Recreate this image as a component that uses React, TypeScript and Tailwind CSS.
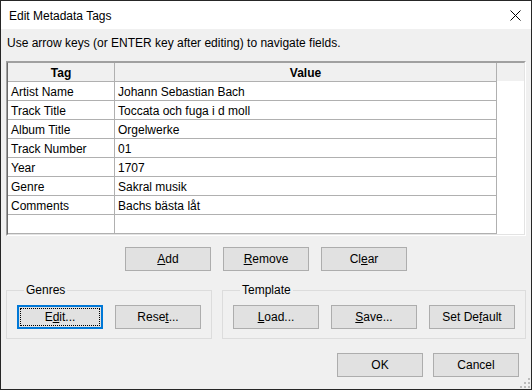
import type { ReactNode } from "react";

const rows: [string, string][] = [
  ["Artist Name", "Johann Sebastian Bach"],
  ["Track Title", "Toccata och fuga i d moll"],
  ["Album Title", "Orgelwerke"],
  ["Track Number", "01"],
  ["Year", "1707"],
  ["Genre", "Sakral musik"],
  ["Comments", "Bachs bästa låt"],
  ["", ""],
];

function Btn({
  children,
  focused = false,
}: {
  children: ReactNode;
  focused?: boolean;
}) {
  if (focused) {
    return (
      <div className="flex h-[24px] w-[86px] items-center justify-center border-2 border-[#0078d7] bg-[#e1e1e1] p-[1px]">
        <div className="flex h-full w-full items-center justify-center border border-dotted border-black">
          {children}
        </div>
      </div>
    );
  }
  return (
    <div className="flex h-[24px] w-[86px] items-center justify-center border border-[#adadad] bg-[#e1e1e1]">
      {children}
    </div>
  );
}

function Group({
  title,
  width,
  children,
}: {
  title: string;
  width: string;
  children: ReactNode;
}) {
  return (
    <fieldset className={`${width} border border-[#dcdcdc] px-[10px] pb-[9px] pt-[7px]`}>
      <legend className="ml-[7px] px-[2px] leading-[16px]">{title}</legend>
      <div className="flex gap-[12px]">{children}</div>
    </fieldset>
  );
}

export default function App() {
  return (
    <div
      className="flex h-[390px] w-[532px] flex-col border border-[#262626] bg-white text-[12px] leading-[16px] text-black"
      style={{ fontFamily: '"Liberation Sans", Arial, sans-serif' }}
    >
      <div className="flex h-[30px] items-center justify-between pl-[8px] pr-[10px] pt-[1px]">
        <span>Edit Metadata Tags</span>
        <svg width="11" height="11" viewBox="0 0 11 11">
          <path d="M0.5 0.5L10.5 10.5M10.5 0.5L0.5 10.5" stroke="#000" strokeWidth="1" />
        </svg>
      </div>

      <div className="flex flex-1 flex-col bg-[#f0f0f0] px-[5px] pt-[6px]">
        <div className="pl-[1px]">Use arrow keys (or ENTER key after editing) to navigate fields.</div>

        <div className="mt-[10px] h-[175px] border border-b-white border-l-[#a0a0a0] border-r-white border-t-[#a0a0a0]">
          <div className="flex h-full border border-b-[#e3e3e3] border-l-[#696969] border-r-[#e3e3e3] border-t-[#a0a0a0] bg-white">
            <div className="flex w-[489px] flex-col">
              <div className="flex h-[19px] border-b border-[#b0b0b0] bg-[#f0f0f0] font-bold">
                <div className="flex w-[107px] items-center justify-center border-r border-[#b0b0b0] pt-[1px]">Tag</div>
                <div className="flex w-[382px] items-center justify-center border-r border-[#b0b0b0] pt-[1px]">Value</div>
              </div>
              {rows.map(([tag, value], i) => (
                <div key={i} className="flex h-[19px] border-b border-[#b0b0b0]">
                  <div className="flex w-[107px] items-center border-r border-[#b0b0b0] pl-[3px] pt-[1px]">{tag}</div>
                  <div className="flex w-[382px] items-center border-r border-[#b0b0b0] pl-[3px] pt-[1px]">{value}</div>
                </div>
              ))}
            </div>
            <div className="flex flex-1 flex-col">
              <div className="h-[18px] bg-[#f0f0f0]" />
            </div>
          </div>
        </div>

        <div className="mt-[11px] flex justify-center gap-[12px]">
          <Btn>
            <u>A</u>dd
          </Btn>
          <Btn>
            <u>R</u>emove
          </Btn>
          <Btn>
            Cl<u>e</u>ar
          </Btn>
        </div>

        <div className="mt-[11px] flex gap-[10px]">
          <Group title="Genres" width="w-[206px]">
            <Btn focused>
              E<u>d</u>it...
            </Btn>
            <Btn>
              Rese<u>t</u>...
            </Btn>
          </Group>
          <Group title="Template" width="w-[304px]">
            <Btn>
              <u>L</u>oad...
            </Btn>
            <Btn>
              <u>S</u>ave...
            </Btn>
            <Btn>
              Set De<u>f</u>ault
            </Btn>
          </Group>
        </div>

        <div className="mr-[7px] mt-[14px] flex justify-end gap-[10px]">
          <Btn>OK</Btn>
          <Btn>Cancel</Btn>
        </div>

        <div className="-mr-[5px] mt-auto flex justify-end">
          <svg width="12" height="12" viewBox="0 0 12 12">
            {[
              [9, 1],
              [9, 5],
              [5, 5],
              [9, 9],
              [5, 9],
              [1, 9],
            ].map(([x, y], i) => (
              <rect key={i} x={x} y={y} width="2" height="2" fill="#bcbcbc" />
            ))}
          </svg>
        </div>
      </div>
    </div>
  );
}
